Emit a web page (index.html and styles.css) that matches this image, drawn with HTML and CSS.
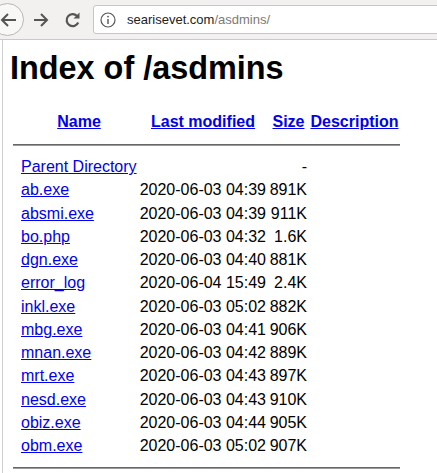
FILE: index.html
```html
<!DOCTYPE html>
<html>
<head>
<meta charset="utf-8">
<title>Index of /asdmins</title>
<link rel="stylesheet" href="styles.css">
</head>
<body>
<div class="toolbar">
  <div class="nav-btn back">
    <svg width="18" height="16" viewBox="0 0 18 16"><path d="M16 8H2M8 2L2 8l6 6" fill="none" stroke="#555" stroke-width="2"/></svg>
  </div>
  <div class="nav-btn fwd">
    <svg width="16" height="16" viewBox="0 0 16 16"><path d="M1 8h13M8 2l6 6-6 6" fill="none" stroke="#555" stroke-width="2"/></svg>
  </div>
  <div class="nav-btn reload">
    <svg width="18" height="18" viewBox="0 0 18 18"><path d="M14.2 11.5A6 6 0 1 1 13 5" fill="none" stroke="#555" stroke-width="2.2"/><path d="M15.5 1.5v6h-6z" fill="#555"/></svg>
  </div>
  <div class="urlbar">
    <svg class="info" width="16" height="16" viewBox="0 0 16 16"><circle cx="8" cy="8" r="7" fill="none" stroke="#555" stroke-width="1.2"/><path d="M8 7v5" stroke="#555" stroke-width="1.4"/><circle cx="8" cy="4.6" r="0.9" fill="#555"/></svg>
    <span class="host">searisevet.com</span><span class="path">/asdmins/</span>
  </div>
</div>
<div class="page">
  <h1>Index of /asdmins</h1>
  <table class="listing">
    <colgroup><col class="c-ico"><col class="c-name"><col class="c-date"><col class="c-size"><col class="c-desc"></colgroup>
    <tr class="head"><th></th><th><a href="#">Name</a></th><th class="h-date"><a href="#">Last modified</a></th><th class="h-size"><a href="#">Size</a></th><th><a href="#">Description</a></th></tr>
    <tr class="rule"><th colspan="5"><div class="hr"></div></th></tr>
    <tr><td></td><td><a href="#">Parent Directory</a></td><td></td><td class="num">-</td><td></td></tr>
    <tr><td></td><td><a href="#">ab.exe</a></td><td class="num">2020-06-03 04:39</td><td class="num">891K</td><td></td></tr>
    <tr><td></td><td><a href="#">absmi.exe</a></td><td class="num">2020-06-03 04:39</td><td class="num">911K</td><td></td></tr>
    <tr><td></td><td><a href="#">bo.php</a></td><td class="num">2020-06-03 04:32</td><td class="num">1.6K</td><td></td></tr>
    <tr><td></td><td><a href="#">dgn.exe</a></td><td class="num">2020-06-03 04:40</td><td class="num">881K</td><td></td></tr>
    <tr><td></td><td><a href="#">error_log</a></td><td class="num">2020-06-04 15:49</td><td class="num">2.4K</td><td></td></tr>
    <tr><td></td><td><a href="#">inkl.exe</a></td><td class="num">2020-06-03 05:02</td><td class="num">882K</td><td></td></tr>
    <tr><td></td><td><a href="#">mbg.exe</a></td><td class="num">2020-06-03 04:41</td><td class="num">906K</td><td></td></tr>
    <tr><td></td><td><a href="#">mnan.exe</a></td><td class="num">2020-06-03 04:42</td><td class="num">889K</td><td></td></tr>
    <tr><td></td><td><a href="#">mrt.exe</a></td><td class="num">2020-06-03 04:43</td><td class="num">897K</td><td></td></tr>
    <tr><td></td><td><a href="#">nesd.exe</a></td><td class="num">2020-06-03 04:43</td><td class="num">910K</td><td></td></tr>
    <tr><td></td><td><a href="#">obiz.exe</a></td><td class="num">2020-06-03 04:44</td><td class="num">905K</td><td></td></tr>
    <tr><td></td><td><a href="#">obm.exe</a></td><td class="num">2020-06-03 05:02</td><td class="num">907K</td><td></td></tr>
    <tr class="rule bottom"><th colspan="5"><div class="hr"></div></th></tr>
  </table>
</div>
</body>
</html>
```

FILE: styles.css
```css
html, body {
  margin: 0;
  padding: 0;
  background: #fff;
  font-family: "Liberation Sans", Arial, sans-serif;
}

.toolbar {
  height: 39px;
  background: #f2f1f0;
  border-bottom: 1px solid #cdcac6;
  display: flex;
  align-items: center;
  position: relative;
  overflow: hidden;
}

.nav-btn {
  display: flex;
  align-items: center;
  justify-content: center;
  flex: none;
}

.back {
  width: 33px;
  height: 33px;
  margin-left: -9px;
  border: 1px solid #b9b7b4;
  border-radius: 50%;
  background: #f8f8f7;
  box-sizing: border-box;
}

.back svg { margin-left: 3px; }

.fwd {
  width: 16px;
  margin-left: 9px;
}

.reload {
  width: 18px;
  margin-left: 15px;
}

.urlbar {
  flex: none;
  margin-left: 11px;
  width: 360px;
  height: 29px;
  box-sizing: border-box;
  border: 1px solid #c9c6c2;
  border-radius: 3px;
  background: #fff;
  display: flex;
  align-items: center;
  padding-left: 6px;
  font-size: 13px;
}

.info { margin-right: 11px; }

.host { color: #222; }
.path { color: #7a7a7a; }

.page {
  margin-left: 2px;
  border-left: 1px solid #cfcfcf;
  padding-left: 5px;
  min-height: 433px;
  box-sizing: border-box;
}

h1 {
  margin: 0 0 0 2px;
  padding-top: 10px;
  font-size: 32.4px;
  line-height: 37px;
  font-weight: bold;
  color: #000;
}

.listing {
  margin-top: 23px;
  border-collapse: collapse;
  table-layout: fixed;
  width: 394px;
  font-size: 16px;
}

.c-ico { width: 13px; }
.c-name { width: 116px; }
.c-date { width: 129px; }
.c-size { width: 41px; }
.c-desc { width: 95px; }

.listing td, .listing th {
  padding: 0;
  white-space: nowrap;
  height: 23.25px;
  line-height: 18px;
  vertical-align: middle;
}

.listing th {
  text-align: center;
  font-weight: bold;
}

.listing tr.head th { height: 24px; }

.h-date { padding-left: 3px !important; }
.h-size { padding-left: 4px !important; }

.listing a {
  color: #0000ee;
  text-decoration: underline;
}

.num { text-align: right; }

.listing tr.rule th {
  height: 21.5px;
}

.listing tr.rule.bottom th {
  height: 20px;
}

.hr {
  margin: 0 2px 0 5px;
  height: 0;
  border-top: 1px solid #676767;
  border-bottom: 1px solid #9a9a9a;
}
```
